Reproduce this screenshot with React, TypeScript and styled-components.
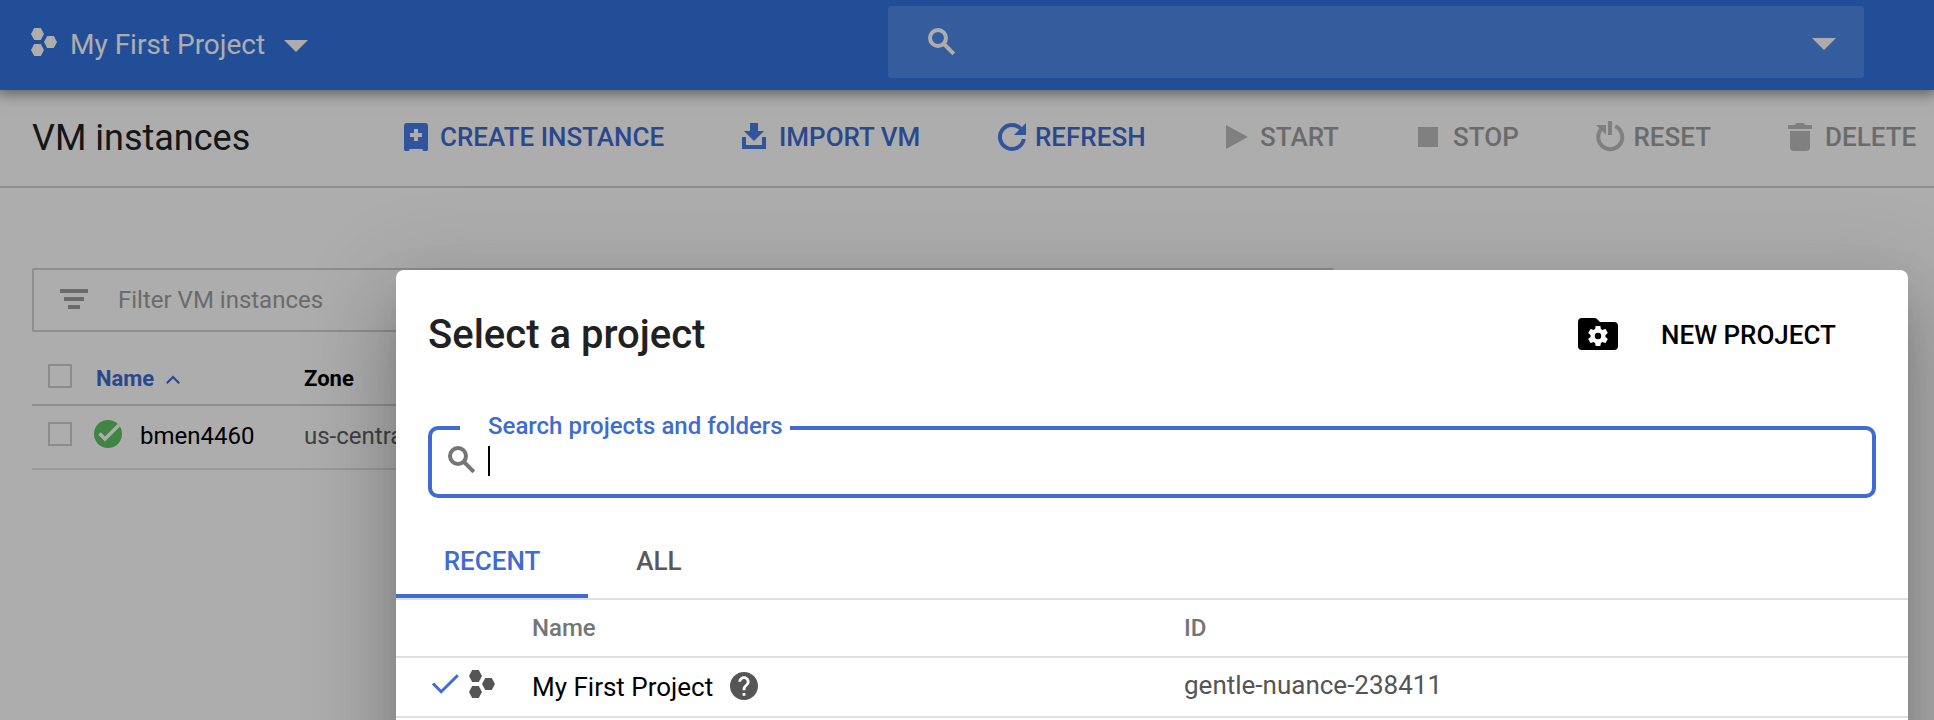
import React from "react";
import styled, { createGlobalStyle } from "styled-components";

const GlobalStyle = createGlobalStyle`
  * { box-sizing: border-box; }
  html, body { margin: 0; padding: 0; background: #fff; overflow: hidden; }
  svg { display: block; flex: none; overflow: visible; }
`;

const BLUE = "#3f6bd2";

const Page = styled.div`
  position: relative;
  width: 1934px;
  height: 720px;
  overflow: hidden;
  background: #fff;
  color: #000;
  font-family: Roboto, "Liberation Sans", sans-serif;
  white-space: nowrap;
`;

const TopBar = styled.header`
  position: relative;
  display: flex;
  align-items: flex-start;
  height: 90px;
  padding: 6px 70px 0 31px;
  background: #3374e0;
  box-shadow: 0 0 14px 3px rgba(0, 0, 0, 0.5);
`;

const ProjectSwitcher = styled.div`
  display: flex;
  align-items: center;
  width: 857px;
  height: 72px;
  color: #fff;
  font-size: 28px;
  line-height: 36px;
`;

const ProjectName = styled.span`
  width: 227px;
  padding: 6px 0 0 13px;
`;

const SwitcherCaret = styled.div`
  padding-top: 8px;
`;

const SearchBar = styled.div`
  display: flex;
  flex: 1;
  justify-content: space-between;
  height: 72px;
  padding: 22px 28px 0 40px;
  border-radius: 4px;
  background: #4e88e6;
`;

const SearchCaret = styled.div`
  padding-top: 10px;
`;

const Toolbar = styled.div`
  display: flex;
  align-items: center;
  height: 98px;
  padding: 0 0 2px 32px;
  border-bottom: 2px solid #d2d2d2;
`;

const PageTitle = styled.h1`
  width: 366px;
  margin: 0;
  padding-top: 2px;
  color: #212121;
  font-size: 36px;
  font-weight: 400;
  line-height: 44px;
`;

const ToolButton = styled.div<{ $pitch: number; $gap?: number; $disabled?: boolean }>`
  display: flex;
  flex: none;
  align-items: center;
  gap: ${(p) => p.$gap ?? 7}px;
  width: ${(p) => p.$pitch}px;
  color: ${(p) => (p.$disabled ? "#9e9e9e" : BLUE)};
  font-size: 26px;
  font-weight: 500;
  line-height: 32px;

  svg {
    color: ${(p) => (p.$disabled ? "#bdbdbd" : "#477ee6")};
  }
`;

const Content = styled.main`
  width: 1334px;
  padding: 80px 0 0 32px;
`;

const FilterBox = styled.div`
  display: flex;
  align-items: center;
  gap: 30px;
  height: 64px;
  padding: 0 26px 2px;
  border: 2px solid #d2d2d2;
  border-radius: 2px;
  color: #9e9e9e;
  font-size: 24px;
  line-height: 32px;
`;

const FilterText = styled.span`
  padding-top: 2px;
`;

const InstanceRow = styled.div<{ $head?: boolean }>`
  display: flex;
  align-items: flex-start;
  height: ${(p) => (p.$head ? 74 : 64)}px;
  padding: ${(p) => (p.$head ? 32 : 14)}px 0 0 16px;
  border-bottom: 2px solid ${(p) => (p.$head ? "#d2d2d2" : "#e3e3e3")};
  font-size: ${(p) => (p.$head ? 22 : 24)}px;
  font-weight: ${(p) => (p.$head ? 700 : 400)};
  line-height: 28px;
`;

const Checkbox = styled.span<{ $head?: boolean }>`
  width: 24px;
  height: 24px;
  margin-top: ${(p) => (p.$head ? 0 : 2)}px;
  border: 2px solid #cfcfcf;
`;

const HeadName = styled.div`
  display: flex;
  align-items: center;
  gap: 12px;
  width: 208px;
  margin-left: 24px;
  padding-top: 1px;
  color: ${BLUE};
`;

const HeadZone = styled.div`
  padding-top: 1px;
`;

const InstanceName = styled.div`
  display: flex;
  gap: 18px;
  width: 210px;
  margin-left: 22px;
`;

const CellText = styled.span<{ $muted?: boolean }>`
  padding-top: 2px;
  color: ${(p) => (p.$muted ? "#606060" : "#000")};
`;

const Backdrop = styled.div`
  position: absolute;
  inset: 0;
  background: rgba(0, 0, 0, 0.32);
`;

const Dialog = styled.section`
  position: absolute;
  top: 270px;
  left: 396px;
  width: 1512px;
  height: 620px;
  border-radius: 8px;
  background: #fff;
  box-shadow:
    0 22px 30px -14px rgba(0, 0, 0, 0.2),
    0 48px 76px 6px rgba(0, 0, 0, 0.14),
    0 18px 92px 16px rgba(0, 0, 0, 0.12);
`;

const DialogHeader = styled.div`
  display: flex;
  align-items: center;
  height: 128px;
  padding: 0 72px 0 32px;
`;

const DialogTitle = styled.h2`
  flex: 1;
  margin: 0;
  padding-top: 2px;
  color: #212121;
  font-size: 40px;
  font-weight: 500;
  line-height: 48px;
`;

const NewProject = styled.div`
  display: flex;
  align-items: center;
  gap: 43px;
  width: 298px;
  margin-right: -40px;
  font-size: 26px;
  font-weight: 500;
  line-height: 32px;
`;

const NewProjectText = styled.span`
  padding-top: 2px;
`;

const SearchField = styled.div`
  position: relative;
  display: flex;
  align-items: flex-start;
  gap: 12px;
  height: 72px;
  margin: 28px 32px 0;
  padding: 16px;
  border: 4px solid ${BLUE};
  border-radius: 10px;
`;

const FieldLabel = styled.label`
  position: absolute;
  top: -18px;
  left: 28px;
  width: 330px;
  padding-left: 28px;
  background: #fff;
  color: ${BLUE};
  font-size: 24px;
  font-weight: 500;
  line-height: 28px;
`;

const TextCursor = styled.span`
  width: 2px;
  height: 30px;
  background: #000;
`;

const Tabs = styled.div`
  display: flex;
  height: 102px;
  border-bottom: 2px solid #e0e0e0;
`;

const Tab = styled.div<{ $active?: boolean }>`
  height: 100px;
  width: ${(p) => (p.$active ? 192 : 142)}px;
  padding-top: 47px;
  border-bottom: ${(p) => (p.$active ? `4px solid ${BLUE}` : "none")};
  color: ${(p) => (p.$active ? BLUE : "#585858")};
  font-size: 26px;
  font-weight: 500;
  line-height: 32px;
  text-align: center;
`;

const ProjectRow = styled.div<{ $head?: boolean }>`
  display: grid;
  grid-template-columns: 101px 652px 1fr;
  align-items: center;
  height: ${(p) => (p.$head ? 58 : 60)}px;
  padding-left: 35px;
  border-bottom: 2px solid #e0e0e0;
  color: ${(p) => (p.$head ? "#757575" : "#000")};
  font-size: ${(p) => (p.$head ? 24 : 26)}px;
  font-weight: ${(p) => (p.$head ? 500 : 400)};
  line-height: 32px;
`;

const RowIcons = styled.div`
  display: flex;
  align-items: center;
  gap: 10px;
  padding: 0 0 6px 1px;
`;

const RowName = styled.div`
  display: flex;
  align-items: center;
  gap: 17px;

  svg {
    margin-bottom: 2px;
  }
`;

const ProjectId = styled.div`
  padding-bottom: 4px;
  color: #555;
`;

const HexIcon = ({ color }: { color: string }) => (
  <svg width="26" height="28" viewBox="0 0 26 28" fill={color}>
    <path d="M0 6 3.200 0h6.600L13 6l-3.200 6H3.200zM0 22l3.200-6h6.600l3.200 6-3.200 6H3.200zM13 14l3.200-6h6.600l3.200 6-3.200 6h-6.600z" />
  </svg>
);

const CaretIcon = () => (
  <svg width="24" height="12" viewBox="0 0 24 12" fill="#fff">
    <path d="M0 0h24L12 12z" />
  </svg>
);

const SearchIcon = ({ color }: { color: string }) => (
  <svg width="28" height="28" viewBox="0 0 28 28" fill="none" stroke={color} strokeWidth="4">
    <circle cx="10" cy="10" r="8" />
    <path d="m15.500 15.500 10.300 10.300" />
  </svg>
);

const CreateIcon = () => (
  <svg width="36" height="36" viewBox="0 0 36 36" fill="currentColor">
    <path
      fillRule="evenodd"
      d="M9 4h18a3 3 0 0 1 3 3v23.500a1.500 1.500 0 0 1-1.500 1.500h-2.500a1.500 1.500 0 0 1-1.500-1.500V30h-13v.5a1.500 1.500 0 0 1-1.500 1.500H7.500A1.500 1.500 0 0 1 6 30.500V7a3 3 0 0 1 3-3zM16 10v4h-4v4h4v4h4v-4h4v-4h-4v-4z"
    />
  </svg>
);

const ImportIcon = () => (
  <svg width="36" height="36" viewBox="0 0 36 36" fill="currentColor">
    <path d="M14 4h8v8h6L18 22 8 12h6zM6 18h4v8h16v-8h4v12H6z" />
  </svg>
);

const RefreshIcon = () => (
  <svg width="36" height="36" viewBox="0 0 36 36">
    <path d="M29.800 20A12 12 0 1 1 27 10" fill="none" stroke="currentColor" strokeWidth="4" />
    <path d="M32 4v12H20z" fill="currentColor" />
  </svg>
);

const StartIcon = () => (
  <svg width="36" height="36" viewBox="0 0 36 36" fill="currentColor">
    <path d="M8 6l22 12L8 30z" />
  </svg>
);

const StopIcon = () => (
  <svg width="36" height="36" viewBox="0 0 36 36" fill="currentColor">
    <path d="M8 8h20v20H8z" />
  </svg>
);

const ResetIcon = () => (
  <svg width="36" height="36" viewBox="0 0 36 36">
    <path d="M10.500 9A12 12 0 1 0 23.200 7.200" fill="none" stroke="currentColor" strokeWidth="4" />
    <path d="M4 6h10v9.800zM16 2h4v14h-4z" fill="currentColor" />
  </svg>
);

const DeleteIcon = () => (
  <svg width="36" height="36" viewBox="0 0 36 36" fill="currentColor">
    <path d="M6 6h7l1.500-2h7L23 6h7v4H6zM8 12h20v16a4 4 0 0 1-4 4H12a4 4 0 0 1-4-4z" />
  </svg>
);

const FilterIcon = () => (
  <svg width="28" height="20" viewBox="0 0 28 20" fill="#9e9e9e">
    <path d="M0 0h28v4H0zM4 8h20v4H4zM8 16h12v4H8z" />
  </svg>
);

const SortIcon = () => (
  <svg width="14" height="9" viewBox="0 0 14 9" fill="none" stroke={BLUE} strokeWidth="2.200">
    <path d="m.8 8.200 6.200-6.200 6.200 6.200" />
  </svg>
);

const RunningIcon = () => (
  <svg width="28" height="28" viewBox="0 0 28 28">
    <circle cx="14" cy="14" r="14" fill="#5fc463" />
    <path d="M5.500 13.500 11 19 25 5" fill="none" stroke="#fff" strokeWidth="3.600" />
  </svg>
);

const FolderGearIcon = () => (
  <svg width="40" height="32" viewBox="0 0 40 32">
    <path d="M4 0h12.500a4 4 0 0 1 2.500 1l3 3h14a4 4 0 0 1 4 4v20a4 4 0 0 1-4 4H4a4 4 0 0 1-4-4V4a4 4 0 0 1 4-4z" />
    <path
      transform="translate(8 6)"
      fill="#fff"
      fillRule="evenodd"
      d="M19.430 12.980c.04-.32.07-.64.07-.98s-.03-.66-.07-.98l2.110-1.650c.19-.15.24-.42.12-.64l-2-3.460c-.12-.22-.39-.3-.61-.22l-2.490 1c-.52-.4-1.080-.73-1.690-.98l-.38-2.650C14.460 2.180 14.250 2 14 2h-4c-.25 0-.46.18-.49.42l-.38 2.650c-.61.25-1.170.59-1.690.98l-2.490-1c-.23-.09-.49 0-.61.22l-2 3.460c-.13.22-.07.49.12.64l2.110 1.650c-.04.32-.07.65-.07.98s.03.66.07.98l-2.110 1.650c-.19.15-.24.42-.12.64l2 3.460c.12.22.39.3.61.22l2.490-1c.52.4 1.080.73 1.690.98l.38 2.650c.03.24.24.42.49.42h4c.25 0 .46-.18.49-.42l.38-2.650c.61-.25 1.170-.59 1.690-.98l2.490 1c.23.09.49 0 .61-.22l2-3.460c.12-.22.07-.49-.12-.64l-2.110-1.650zM12 15.200a3.200 3.200 0 1 1 0-6.400 3.200 3.200 0 0 1 0 6.400z"
    />
  </svg>
);

const TickIcon = () => (
  <svg width="27" height="20" viewBox="0 0 27 20" fill="none" stroke={BLUE} strokeWidth="3">
    <path d="m1 9.500 8.200 8.200L25.800 1.200" />
  </svg>
);

const HelpIcon = () => (
  <svg width="28" height="28" viewBox="2 2 20 20" fill="#555">
    <path d="M12 2C6.480 2 2 6.480 2 12s4.480 10 10 10 10-4.480 10-10S17.520 2 12 2zm1 17h-2v-2h2v2zm2.070-7.750-.9.92C13.450 12.900 13 13.500 13 15h-2v-.5c0-1.100.45-2.100 1.170-2.830l1.240-1.260c.37-.36.59-.86.59-1.410 0-1.100-.9-2-2-2s-2 .9-2 2H8c0-2.210 1.790-4 4-4s4 1.790 4 4c0 .88-.36 1.680-.93 2.250z" />
  </svg>
);

export default function App() {
  return (
    <Page>
      <GlobalStyle />
      <TopBar>
        <ProjectSwitcher>
          <HexIcon color="#fff" />
          <ProjectName>My First Project</ProjectName>
          <SwitcherCaret>
            <CaretIcon />
          </SwitcherCaret>
        </ProjectSwitcher>
        <SearchBar>
          <SearchIcon color="#fff" />
          <SearchCaret>
            <CaretIcon />
          </SearchCaret>
        </SearchBar>
      </TopBar>
      <Toolbar>
        <PageTitle>VM instances</PageTitle>
        <ToolButton $pitch={338} $gap={6}><CreateIcon />CREATE INSTANCE</ToolButton>
        <ToolButton $pitch={258}><ImportIcon />IMPORT VM</ToolButton>
        <ToolButton $pitch={224} $gap={5}><RefreshIcon />REFRESH</ToolButton>
        <ToolButton $pitch={192} $gap={6} $disabled><StartIcon />START</ToolButton>
        <ToolButton $pitch={182} $disabled><StopIcon />STOP</ToolButton>
        <ToolButton $pitch={190} $gap={5.5} $disabled><ResetIcon />RESET</ToolButton>
        <ToolButton $pitch={150} $disabled><DeleteIcon />DELETE</ToolButton>
      </Toolbar>
      <Content>
        <FilterBox>
          <FilterIcon />
          <FilterText>Filter VM instances</FilterText>
        </FilterBox>
        <InstanceRow $head>
          <Checkbox $head />
          <HeadName>Name<SortIcon /></HeadName>
          <HeadZone>Zone</HeadZone>
        </InstanceRow>
        <InstanceRow>
          <Checkbox />
          <InstanceName>
            <RunningIcon />
            <CellText>bmen4460</CellText>
          </InstanceName>
          <CellText $muted>us-central1-a</CellText>
        </InstanceRow>
      </Content>
      <Backdrop />
      <Dialog>
        <DialogHeader>
          <DialogTitle>Select a project</DialogTitle>
          <NewProject>
            <FolderGearIcon />
            <NewProjectText>NEW PROJECT</NewProjectText>
          </NewProject>
        </DialogHeader>
        <SearchField>
          <FieldLabel>Search projects and folders</FieldLabel>
          <SearchIcon color="#757575" />
          <TextCursor />
        </SearchField>
        <Tabs>
          <Tab $active>RECENT</Tab>
          <Tab>ALL</Tab>
        </Tabs>
        <ProjectRow $head>
          <span />
          <span>Name</span>
          <span>ID</span>
        </ProjectRow>
        <ProjectRow>
          <RowIcons>
            <TickIcon />
            <HexIcon color="#555" />
          </RowIcons>
          <RowName>My First Project<HelpIcon /></RowName>
          <ProjectId>gentle-nuance-238411</ProjectId>
        </ProjectRow>
      </Dialog>
    </Page>
  );
}
